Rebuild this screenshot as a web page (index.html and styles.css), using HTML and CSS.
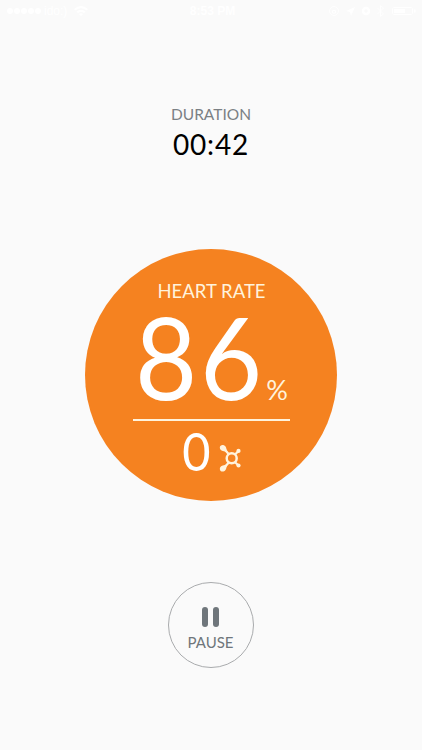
FILE: index.html
```html
<!DOCTYPE html>
<html lang="en">
<head>
<meta charset="utf-8">
<title>Workout</title>
<link rel="stylesheet" href="styles.css">
</head>
<body>
<main class="screen">
  <header class="status">
    <div class="status-left">
      <span class="dots"><i></i><i></i><i></i><i></i><i></i></span>
      <span>ido:)</span>
      <svg width="14" height="10" viewBox="0 0 14 10"><path d="M0 3Q7-3 14 3L12.600 4.500Q7 0 1.400 4.500ZM2.500 5.500Q7 2 11.500 5.500L10 7Q7 5 4 7ZM5 8Q7 6.500 9 8L7 10Z" fill="currentColor"/></svg>
    </div>
    <div class="status-time">8:53 PM</div>
    <svg class="status-right" width="90" height="12" viewBox="0 0 90 12">
      <g fill="none" stroke="currentColor"><circle cx="6" cy="6" r="4.500"/><path d="M4.500 5.500h3v2.500h-3z"/><circle cx="38" cy="6" r="3" stroke-width="2.500"/><path d="M49.500 3l6 6-3 2.500V.5L55.500 3l-6 6"/><rect x="64.500" y="2.500" width="20" height="7" rx="1"/></g>
      <path d="M18 6l9-4-4 9-1-4zM66 4h11v4H66zM86 4.500h1.500v3H86z" fill="currentColor"/>
    </svg>
  </header>
  <section class="duration">
    <div class="duration-label">DURATION</div>
    <div class="duration-time">00:42</div>
  </section>
  <section class="dial">
    <div class="dial-label">HEART RATE</div>
    <div class="rate"><span class="rate-value">86</span><span class="rate-unit">%</span></div>
    <div class="rule"></div>
    <div class="points">
      <span class="points-value">0</span>
      <svg class="splat" width="22" height="28" viewBox="0 0 22 28">
        <circle cx="12.700" cy="14.300" r="5" fill="none" stroke="currentColor" stroke-width="2.500"/>
        <path d="M4.500 4L9.600 10M4.500 24.500L9.600 18.800M19 7.500L16 10.500M19 21L16 18.200" stroke="currentColor" stroke-width="2.200"/>
        <path d="M.8 3.500C.8.600 4.800 0 6.500 2.500C7.700 4.300 7.200 6 9 9C6.200 7.200 5.500 7.400 3.800 7C2 6.600.8 5.200.8 3.500ZM.8 25C.8 27.900 4.800 28.500 6.500 26C7.700 24.200 7.200 22.500 9 19.500C6.200 21.300 5.500 21.100 3.800 21.500C2 21.900.8 23.300.8 25Z" fill="currentColor"/>
        <circle cx="19.500" cy="6.900" r="2.100" fill="currentColor"/><circle cx="19.500" cy="21.500" r="2.100" fill="currentColor"/>
      </svg>
    </div>
  </section>
  <button class="pause">
    <span class="bars"><i></i><i></i></span>
    <span>PAUSE</span>
  </button>
</main>
</body>
</html>
```
FILE: styles.css
```css
* { box-sizing: border-box; }
body { margin: 0; background: #fafafa; font-family: Lato, "Open Sans", sans-serif; }
.screen { width: 422px; height: 750px; padding-right: 1px; display: flex; flex-direction: column; align-items: center; overflow: hidden; }
.status {
  width: 100%; height: 22px; padding: 0 3px 0 7px; flex: none;
  display: grid; grid-template-columns: 1fr auto 1fr; align-items: center;
  color: #fff; font: 12px/22px "Liberation Sans", sans-serif;
}
.status-left { display: flex; align-items: center; gap: 3px; }
.status-left svg { margin-left: 4px; }
.dots { display: flex; gap: 1px; }
.dots i { width: 6px; height: 6px; border-radius: 50%; background: #fff; }
.status-time { font-weight: bold; }
.status-right { justify-self: end; }
.duration { margin-top: 82px; padding-left: 1px; text-align: center; }
.duration-label { color: #7b8084; font-size: 15.5px; line-height: 20px; }
.duration-time { margin-top: 4px; color: #000; font-size: 28px; line-height: 32px; letter-spacing: 0.8px; }
.dial {
  width: 252px; height: 252px; margin-top: 89px; padding: 30px 0 0 1px; flex: none;
  display: flex; flex-direction: column; align-items: center;
  border-radius: 50%; background: #f58220; color: #fff;
}
.dial-label { padding-left: 1px; color: #fff3dc; font-size: 18.5px; line-height: 24px; }
.rate { display: flex; align-items: baseline; height: 90px; margin-top: 8px; line-height: 90px; padding-left: 1px; }
.rate-value { display: inline-block; width: 131px; font-size: 114px; transform: scaleX(0.94); transform-origin: left; letter-spacing: 3px; }
.rate-unit { font-size: 27px; color: #fff3dc; }
.rule { width: 157px; height: 2px; margin-top: 18px; background: #fff3dc; }
.points { display: flex; align-items: flex-start; gap: 8px; height: 44px; margin-top: 8px; line-height: 44px; }
.points-value { font-size: 53px; transform: scaleX(0.92); }
.splat { margin-top: 15px; color: #fff3dc; }
.pause {
  width: 86px; height: 86px; margin: 81px 0 0; padding: 24px 0 0; flex: none;
  display: flex; flex-direction: column; align-items: center; gap: 5px;
  border: 1px solid #a9abad; border-radius: 50%; background: transparent;
  color: #6f767b; font: 15px/20px Lato, sans-serif;
}
.bars { display: flex; gap: 5px; }
.bars i { width: 6px; height: 20px; border-radius: 3px; background: #6f767b; }
```
